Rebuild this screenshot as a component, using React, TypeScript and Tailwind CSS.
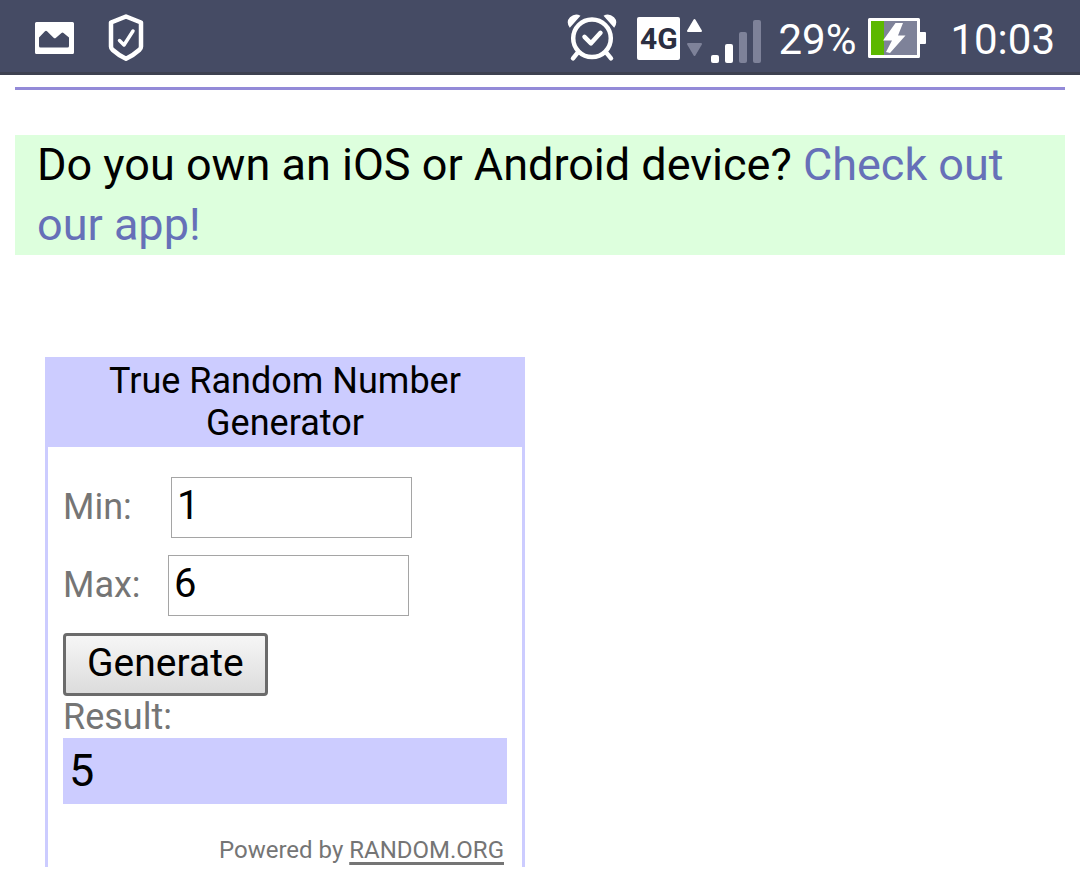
import { useState } from 'react'

function PictureIcon() {
  return (
    <svg width="39" height="32" viewBox="0 0 39 32" className="shrink-0" aria-hidden="true">
      <path
        fill="#fff"
        fillRule="evenodd"
        d="M1.5 0h36A1.5 1.5 0 0 1 39 1.5v29a1.5 1.5 0 0 1-1.5 1.500h-36A1.500 1.500 0 0 1 0 30.500v-29A1.500 1.500 0 0 1 1.500 0zM4 15.500V24q0 1.500 1.500 1.500h27q1.500 0 1.500-1.500v-8.500L28.500 11q-1-.8-2 0l-5.500 4.800q-1.200 1-2.400 0L12 9.200q-1-.9-2 0z"
      />
    </svg>
  )
}

function ShieldIcon() {
  return (
    <svg width="36" height="48" viewBox="0 0 36 48" className="shrink-0" fill="none" stroke="#fff" aria-hidden="true">
      <path d="M18 2.500 33 8.500v24q0 2-1.500 3.200Q25 41.500 18 44.800 11 41.500 4.500 35.700 3 34.500 3 32.500v-24z" strokeWidth="4.500" strokeLinejoin="round" />
      <path d="M11.500 26.500l4.500 4.500 9-14" strokeWidth="3.500" strokeLinecap="round" strokeLinejoin="round" />
    </svg>
  )
}

function AlarmIcon() {
  return (
    <svg width="50" height="48" viewBox="0 .7 50 48" className="shrink-0" fill="none" stroke="#fff" aria-hidden="true">
      <circle cx="25" cy="25" r="18.800" strokeWidth="4.500" />
      <path d="M17.500 23.500l6.500 6.500 9.500-10.500" strokeWidth="4.500" strokeLinecap="round" strokeLinejoin="round" />
      <path d="M10.500 39.500 6 45M39.500 39.500 44 45" strokeWidth="4.500" strokeLinecap="round" />
      <path d="M2.800 14.500Q-1.500 8.500 3 4 8-.5 13.500 2.500zM47.200 14.500Q51.500 8.500 47 4 42-.5 36.500 2.500z" fill="#fff" stroke="none" />
    </svg>
  )
}

function SignalIcon() {
  return (
    <svg width="76" height="52" viewBox="0 -4 76 52" className="shrink-0" aria-hidden="true">
      <g strokeWidth="2" strokeLinejoin="round">
        <path d="M8.500 4 15 15H2z" fill="#fff" stroke="#fff" />
        <path d="M2 28h13L8.500 39z" fill="#7e8299" stroke="#7e8299" />
      </g>
      <rect x="25" y="39" width="8" height="8" rx="2" fill="#fff" />
      <rect x="39" y="28" width="8" height="19" rx="2" fill="#fff" />
      <rect x="53" y="16" width="8" height="31" rx="2" fill="#7e8299" />
      <rect x="67" y="4" width="8" height="43" rx="2" fill="#7e8299" />
    </svg>
  )
}

function BatteryIcon() {
  return (
    <svg width="58" height="40" viewBox="0 0 58 40" className="shrink-0" aria-hidden="true">
      <rect x="1.500" y="1.500" width="49" height="37" fill="#7e8299" stroke="#fff" strokeWidth="3" strokeLinejoin="round" />
      <rect x="3" y="3" width="13" height="34" fill="#5cb800" />
      <rect x="51" y="14" width="7" height="12" rx="1" fill="#fff" />
      <path d="M27.500 5H35l-5 12.500h7.500L22 35l-4-1 6-11.500h-9z" fill="#fff" />
    </svg>
  )
}

function StatusBar() {
  return (
    <header className="h-[75px] border-b-3 border-[#3d4150] bg-[#454b64] pt-1 pl-[35px] pr-[25px] flex items-center justify-between text-[42px] leading-12 text-white">
      <div className="flex items-center gap-[34px]">
        <PictureIcon />
        <ShieldIcon />
      </div>
      <div className="flex items-center">
        <AlarmIcon />
        <span className="ml-5 w-[43px] h-[43px] rounded-xs bg-white text-[#2b2f42] text-[30px] leading-[43px] font-bold text-center">
          4G
        </span>
        <span className="ml-[6px]">
          <SignalIcon />
        </span>
        <span className="ml-4 pt-1">29%</span>
        <span className="ml-3">
          <BatteryIcon />
        </span>
        <span className="ml-6 pt-1">10:03</span>
      </div>
    </header>
  )
}

interface NumberFieldProps {
  id: string
  label: string
  labelClass: string
  value: string
  onChange: (value: string) => void
}

function NumberField({ id, label, labelClass, value, onChange }: NumberFieldProps) {
  return (
    <div className="flex items-center">
      <label htmlFor={id} className={labelClass}>
        {label}
      </label>
      <input
        id={id}
        type="text"
        inputMode="numeric"
        value={value}
        onChange={(e) => onChange(e.target.value)}
        className="w-[241px] h-[61px] border border-[#a5a5a5] bg-white px-[5px] pb-1 text-[40px] text-black"
      />
    </div>
  )
}

function Generator() {
  const [min, setMin] = useState('1')
  const [max, setMax] = useState('6')
  const [result, setResult] = useState(5)

  const generate = () => {
    const lo = Number(min)
    const hi = Number(max)
    setResult(lo + Math.floor(Math.random() * (hi - lo + 1)))
  }

  return (
    <section className="w-full max-w-[480px] border-x-3 border-[#ccccff] text-[36px] leading-[42px] text-[#757575]">
      <h1 className="bg-[#ccccff] px-4 py-[3px] text-center text-black">True Random Number Generator</h1>
      <div className="px-[15px] pt-[30px]">
        <div className="flex flex-col items-start gap-[17px]">
          <NumberField id="min" label="Min:" labelClass="w-[108px] pb-[2px]" value={min} onChange={setMin} />
          <NumberField id="max" label="Max:" labelClass="w-[105px] pb-[2px]" value={max} onChange={setMax} />
          <button
            type="button"
            onClick={generate}
            className="h-[63px] rounded-sm border-3 border-[#6b6b6b] bg-linear-to-b from-[#f6f6f6] to-[#dcdcdc] px-[21px] pb-1 text-[39px] text-black"
          >
            Generate
          </button>
        </div>
        <p>Result:</p>
        <div className="h-[66px] bg-[#ccccff] px-[6px] text-[45px] leading-[66px] text-black">{result}</div>
        <p className="pt-[30px] pr-[3px] text-right text-[24px] leading-[33px]">
          Powered by{' '}
          <a href="#random" className="underline decoration-3 underline-offset-4">
            RANDOM.ORG
          </a>
        </p>
      </div>
    </section>
  )
}

export default function App() {
  return (
    <div className="min-h-screen bg-white font-[Roboto,sans-serif]">
      <StatusBar />
      <main className="px-[15px] pt-3">
        <hr className="border-t-3 border-[#938ad8]" />
        <p className="mt-[45px] bg-[#ddffdd] px-[22px] text-[45px] leading-[60px] text-black">
          Do you own an iOS or Android device?{' '}
          <a href="#app" className="text-[#6670b8]">
            Check out our app!
          </a>
        </p>
        <div className="mt-[102px] px-[30px]">
          <Generator />
        </div>
      </main>
    </div>
  )
}
